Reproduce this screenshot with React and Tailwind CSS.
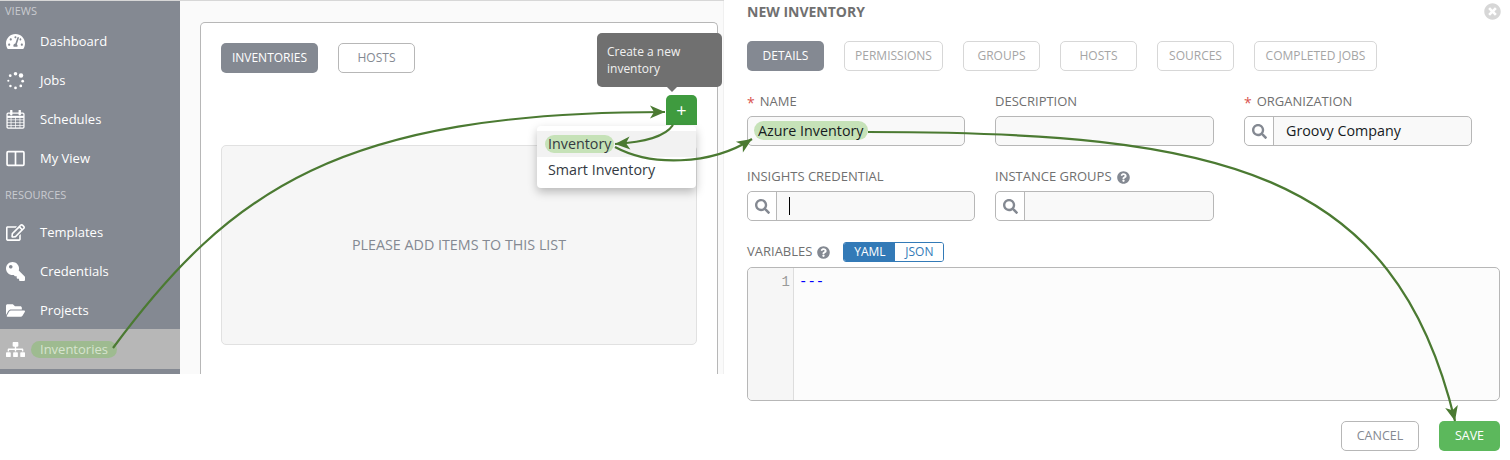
import {
    FaTachometerAlt,
    FaRegEdit,
    FaKey,
    FaFolderOpen,
    FaSitemap,
    FaSearch,
    FaQuestionCircle,
    FaTimesCircle
} from 'react-icons/fa';

const MyViewIcon = ({ className = '' }) => (
    <svg viewBox="0 0 18 16" className={className} fill="none" stroke="currentColor" strokeWidth="1.6">
        <rect x="1" y="1.5" width="16" height="13" rx="1" />
        <line x1="9" y1="1.5" x2="9" y2="14.5" />
    </svg>
);

// dots get bigger going round, like the old fa-spinner
const JobsIcon = ({ className = '' }) => (
    <svg viewBox="0 0 18 18" className={className} fill="currentColor">
        <circle cx="9" cy="2.6" r="1.7" />
        <circle cx="14.2" cy="4.2" r="2.1" />
        <circle cx="15.8" cy="9.6" r="1.3" />
        <circle cx="14" cy="14.2" r="1.3" />
        <circle cx="9" cy="16" r="1.3" />
        <circle cx="4.2" cy="14.2" r="1.2" />
        <circle cx="2.2" cy="9.2" r="1" />
        <circle cx="4" cy="4.4" r="1.3" />
    </svg>
);

const CalendarIcon = ({ className = '' }) => (
    <svg viewBox="0 0 18 18" className={className} fill="none" stroke="currentColor">
        <rect x="1" y="3" width="16" height="14.2" rx="1" strokeWidth="1.2" />
        <path d="M1 6.5H17" strokeWidth="2" />
        <path d="M1 9.3H17M1 12H17M1 14.7H17M4.8 6.5V17M9 6.5V17M13.2 6.5V17" strokeWidth="0.7" />
        <path d="M5 0.8V4.2M13 0.8V4.2" strokeWidth="2.2" strokeLinecap="round" />
    </svg>
);

const viewItems = [
    { label: 'Dashboard', Icon: FaTachometerAlt },
    { label: 'Jobs', Icon: JobsIcon },
    { label: 'Schedules', Icon: CalendarIcon },
    { label: 'My View', Icon: MyViewIcon }
];

const resourceItems = [
    { label: 'Templates', Icon: FaRegEdit },
    { label: 'Credentials', Icon: FaKey, flip: true },
    { label: 'Projects', Icon: FaFolderOpen }
];

const formTabs = [
    { label: 'PERMISSIONS', width: 'w-[99px]' },
    { label: 'GROUPS', width: 'w-[77px]' },
    { label: 'HOSTS', width: 'w-[77px]' },
    { label: 'SOURCES', width: 'w-[77px]' },
    { label: 'COMPLETED JOBS', width: 'w-[123px]' }
];

const SideItem = ({ label, Icon, flip }) => (
    <div className="flex h-[39px] items-center pl-[6px] text-[13px] text-white">
        <span className="flex w-[34px] shrink-0">
            <Icon className={`h-[19px] w-[19px] ${flip ? '-scale-x-100' : ''}`} />
        </span>
        {label}
    </div>
);

const Required = () => <span className="mr-[5px] text-[14px] text-[#d9534f]">*</span>;

const Lookup = ({ width, value, cursor }) => (
    <div className={`flex h-[30px] ${width} rounded-[5px] border border-[#b7b7b7] bg-[#f9f9f9]`}>
        <div className="flex w-[29px] shrink-0 items-center justify-center rounded-l-[5px] border-r border-[#b7b7b7] bg-white">
            <FaSearch className="h-[15px] w-[15px] text-[#848992]" />
        </div>
        <div className="flex items-center pl-[12px] text-[14.3px] text-[#161b1f]">
            {value}
            {cursor && <span className="h-[18px] w-px bg-black" />}
        </div>
    </div>
);

const Arrows = () => (
    <svg className="pointer-events-none absolute left-0 top-0 h-[460px] w-[1510px]" viewBox="0 0 1510 460" fill="none">
        <defs>
            <marker id="head" markerUnits="userSpaceOnUse" markerWidth="20" markerHeight="16" refX="16" refY="8" orient="auto">
                <path d="M16 8 L1 1.5 L5 8 L1 14.5 Z" fill="#4b7a32" />
            </marker>
        </defs>
        <g stroke="#4b7a32" strokeWidth="2.2">
            <path d="M113 348 C 230 190, 340 112, 665 112" markerEnd="url(#head)" />
            <path d="M673 125 C 665 137, 645 142, 615 144" markerEnd="url(#head)" />
            <path d="M615 147 C 650 166, 710 166, 752 139" markerEnd="url(#head)" />
            <path d="M868 132 C 1220 132, 1395 170, 1455 421" markerEnd="url(#head)" />
        </g>
    </svg>
);

export default function App() {
    return (
        <div className="relative flex h-[460px] w-[1510px] overflow-hidden bg-white font-['Open_Sans',sans-serif]">
            {/* left screenshot */}
            <div className="flex h-[374px] w-[724px] shrink-0 border-t border-[#d7d7d7]">
                <aside className="h-full w-[180px] shrink-0 bg-[#848992]">
                    <div className="flex h-[21px] items-center pl-[5px] text-[11px] text-[#c9cbd0]">VIEWS</div>
                    {viewItems.map((item) => (
                        <SideItem key={item.label} {...item} />
                    ))}
                    <div className="flex h-[35px] items-center pl-[5px] text-[11px] text-[#c9cbd0]">RESOURCES</div>
                    {resourceItems.map((item) => (
                        <SideItem key={item.label} {...item} />
                    ))}
                    <div className="mt-[-1px] flex h-[40px] items-center bg-[#b7b7b7] pl-[6px] text-[13px]">
                        <span className="flex w-[25px] shrink-0 text-white">
                            <FaSitemap className="h-[19px] w-[19px]" />
                        </span>
                        <span className="rounded-full bg-[#9ebb90] px-[9px] leading-[17px] text-[#d7e4cf]">Inventories</span>
                    </div>
                </aside>
                <main className="h-full flex-1 border-r border-[#f0f0f0] bg-[#fafafa] pl-[20px] pr-[5px] pt-[21px]">
                    <div className="h-full rounded-t-[5px] border border-b-0 border-[#b7b7b7] bg-white px-[20px] pt-[20px]">
                        <div className="flex gap-[20px] text-xs">
                            <div className="flex h-[30px] w-[97px] items-center justify-center rounded-[5px] bg-[#848992] text-white">INVENTORIES</div>
                            <div className="flex h-[30px] w-[77px] items-center justify-center rounded-[5px] border border-[#b7b7b7] text-[#848992]">HOSTS</div>
                        </div>
                        <div className="relative mt-[22px] flex h-[30px] w-[476px] justify-end">
                            <div className="relative flex h-[30px] w-[31px] items-center justify-center rounded-t-[5px] bg-[#3f9b3f] text-lg leading-none text-white">+</div>
                            <div className="absolute left-[376px] top-[-62px] h-[54px] w-[125px] rounded-[5px] bg-[#707070] px-[10px] pt-[10px] text-xs leading-[17px] text-[#f0f0f0]">
                                Create a new inventory
                                <span className="absolute left-[70px] top-[54px] border-x-[5px] border-t-[5px] border-x-transparent border-t-[#707070]" />
                            </div>
                            <div className="absolute left-[316px] top-[31px] h-[62px] w-[159px] rounded-[4px] bg-white py-[5px] text-[14.3px] text-[#343a42] shadow-[0_4px_10px_rgba(0,0,0,0.25)]">
                                <div className="flex h-[26px] items-center bg-[#f2f2f2] pl-[8px]">
                                    <span className="rounded-full bg-[#c6e2b8] px-[3px] leading-[18px]">Inventory</span>
                                </div>
                                <div className="flex h-[26px] items-center pl-[11px]">Smart Inventory</div>
                            </div>
                        </div>
                        <div className="mt-[20px] flex h-[200px] w-[476px] items-center justify-center rounded-[5px] border border-[#e1e1e1] bg-[#f6f6f6] text-[14.3px] text-[#848992]">
                            PLEASE ADD ITEMS TO THIS LIST
                        </div>
                    </div>
                </main>
            </div>

            {/* right screenshot */}
            <div className="ml-[23px] w-[753px] shrink-0">
                <div className="flex h-[22px] items-center justify-between">
                    <span className="text-[14px] font-bold text-[#707070]">NEW INVENTORY</span>
                    <FaTimesCircle className="mr-[-1px] h-[17px] w-[17px] text-[#d7d7d7]" />
                </div>
                <div className="mt-[19px] flex gap-[20px] text-xs">
                    <div className="flex h-[30px] w-[77px] items-center justify-center rounded-[5px] bg-[#848992] text-white">DETAILS</div>
                    {formTabs.map((tab) => (
                        <div key={tab.label} className={`flex h-[30px] ${tab.width} items-center justify-center rounded-[5px] border border-[#d7d7d7] text-[#a5a5a5]`}>
                            {tab.label}
                        </div>
                    ))}
                </div>

                <div className="mt-[22px] flex text-[13px] text-[#707070]">
                    <div className="mr-[30px] w-[218px]">
                        <div className="mb-[5px] flex h-[18px] items-center"><Required />NAME</div>
                        <div className="flex h-[30px] items-center rounded-[5px] border border-[#b7b7b7] bg-[#f9f9f9] pb-[1px] pl-[6px] text-[14.3px] text-[#161b1f]">
                            <span className="rounded-full bg-[#c6e2b8] px-[4px] leading-[19px]">Azure Inventory</span>
                        </div>
                    </div>
                    <div className="mr-[30px] w-[219px]">
                        <div className="mb-[5px] flex h-[18px] items-center">DESCRIPTION</div>
                        <div className="h-[30px] rounded-[5px] border border-[#b7b7b7] bg-[#f9f9f9]" />
                    </div>
                    <div className="w-[228px]">
                        <div className="mb-[5px] flex h-[18px] items-center"><Required />ORGANIZATION</div>
                        <Lookup width="w-[228px]" value="Groovy Company" />
                    </div>
                </div>

                <div className="mt-[22px] flex gap-[20px] text-[13px] text-[#707070]">
                    <div className="w-[228px]">
                        <div className="mb-[5px] flex h-[18px] items-center">INSIGHTS CREDENTIAL</div>
                        <Lookup width="w-[228px]" cursor />
                    </div>
                    <div className="w-[219px]">
                        <div className="mb-[5px] flex h-[18px] items-center">
                            INSTANCE GROUPS
                            <FaQuestionCircle className="ml-[5px] h-[13px] w-[13px] text-[#848992]" />
                        </div>
                        <Lookup width="w-[219px]" />
                    </div>
                </div>

                <div className="mt-[21px] flex h-[20px] items-center text-[13px] text-[#707070]">
                    VARIABLES
                    <FaQuestionCircle className="ml-[5px] h-[13px] w-[13px] text-[#848992]" />
                    <div className="ml-[13px] flex h-[20px] w-[101px] overflow-hidden rounded-[3px] border border-[#337ab7] text-xs">
                        <span className="flex w-[51px] items-center justify-center bg-[#337ab7] text-white">YAML</span>
                        <span className="flex flex-1 items-center justify-center bg-white text-[#337ab7]">JSON</span>
                    </div>
                </div>

                <div className="mt-[5px] flex h-[134px] rounded-[5px] border border-[#b7b7b7] bg-[#fcfcfc] font-['Liberation_Mono',monospace] text-sm leading-[28px]">
                    <div className="w-[46px] rounded-l-[5px] border-r border-[#ddd] bg-[#f6f6f6] pr-[3px] text-right text-[#999]">1</div>
                    <div className="pl-[5px] text-[#0000ff]">---</div>
                </div>

                <div className="mt-[20px] flex justify-end gap-[20px] text-[12.5px]">
                    <div className="flex h-[30px] w-[78px] items-center justify-center rounded-[5px] border border-[#b7b7b7] text-[#848992]">CANCEL</div>
                    <div className="flex h-[30px] w-[61px] items-center justify-center rounded-[5px] bg-[#5cb85c] text-white">SAVE</div>
                </div>
            </div>

            <Arrows />
        </div>
    );
}
